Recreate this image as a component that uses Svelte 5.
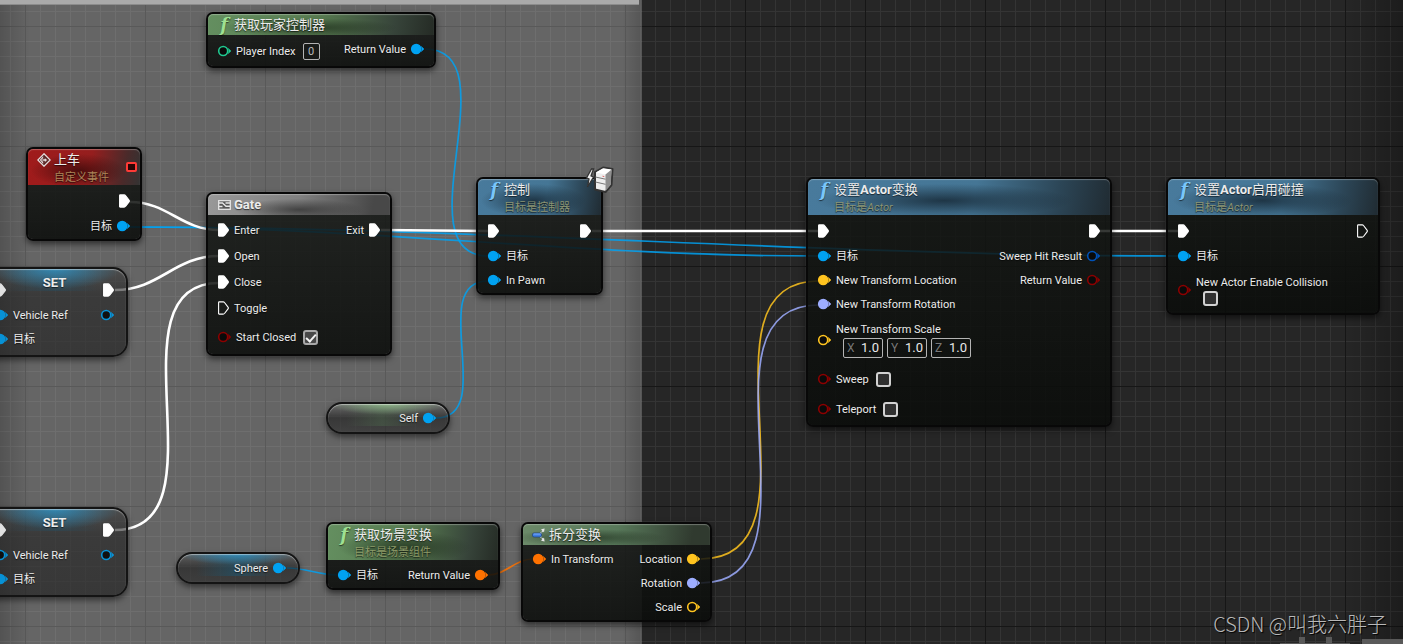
<script lang="ts">
	type Field = 'check' | 'checked' | 'number' | 'vector';

	type Pin = {
		type: string;
		label?: string;
		on?: boolean; // has a wire, drawn filled
		field?: Field;
		size?: string;
	};

	type GraphNode = {
		x: number;
		y: number;
		w: number;
		kind: string;
		icon?: string;
		title?: string;
		subtitle?: string;
		server?: boolean;
		delegate?: boolean;
		left: Pin[];
		right: Pin[];
	};

	const nodes: GraphNode[] = [
		{
			x: 206, y: 12, w: 230, kind: 'pure', icon: 'f', title: '获取玩家控制器',
			left: [{ type: 'int', label: 'Player Index', field: 'number', size: 'mid' }],
			right: [{ type: 'object', label: 'Return Value', on: true }]
		},
		{
			x: 26, y: 147, w: 116, kind: 'event', icon: 'event', title: '上车', subtitle: '自定义事件', delegate: true,
			left: [],
			right: [
				{ type: 'exec', on: true },
				{ type: 'object', label: '目标', on: true }
			]
		},
		{
			x: 206, y: 192, w: 186, kind: 'macro', icon: 'macro', title: 'Gate',
			left: [
				{ type: 'exec', label: 'Enter', on: true },
				{ type: 'exec', label: 'Open', on: true },
				{ type: 'exec', label: 'Close', on: true },
				{ type: 'exec', label: 'Toggle' },
				{ type: 'bool', label: 'Start Closed', field: 'checked', size: 'tall' }
			],
			right: [{ type: 'exec', label: 'Exit', on: true }]
		},
		{
			x: 476, y: 177, w: 127, kind: 'call', icon: 'f', title: '控制', subtitle: '目标是控制器', server: true,
			left: [
				{ type: 'exec', on: true },
				{ type: 'object', label: '目标', on: true },
				{ type: 'object', label: 'In Pawn', on: true }
			],
			right: [{ type: 'exec', on: true }]
		},
		{
			x: 806, y: 177, w: 306, kind: 'call', icon: 'f', title: '设置Actor变换', subtitle: '目标是Actor',
			left: [
				{ type: 'exec', on: true },
				{ type: 'object', label: '目标', on: true },
				{ type: 'vector', label: 'New Transform Location', on: true },
				{ type: 'rotator', label: 'New Transform Rotation', on: true },
				{ type: 'vector', label: 'New Transform Scale', field: 'vector', size: 'stack' },
				{ type: 'bool', label: 'Sweep', field: 'check', size: 'check-row' },
				{ type: 'bool', label: 'Teleport', field: 'check', size: 'check-row' }
			],
			right: [
				{ type: 'exec', on: true },
				{ type: 'struct', label: 'Sweep Hit Result' },
				{ type: 'bool', label: 'Return Value' }
			]
		},
		{
			x: 1166, y: 177, w: 214, kind: 'call', icon: 'f', title: '设置Actor启用碰撞', subtitle: '目标是Actor',
			left: [
				{ type: 'exec', on: true },
				{ type: 'object', label: '目标', on: true },
				{ type: 'bool', label: 'New Actor Enable Collision', field: 'check', size: 'stack' }
			],
			right: [{ type: 'exec' }]
		},
		{
			x: 326, y: 522, w: 174, kind: 'pure', icon: 'f', title: '获取场景变换', subtitle: '目标是场景组件',
			left: [{ type: 'object', label: '目标', on: true }],
			right: [{ type: 'transform', label: 'Return Value', on: true }]
		},
		{
			x: 521, y: 522, w: 191, kind: 'break', icon: 'break', title: '拆分变换',
			left: [{ type: 'transform', label: 'In Transform', on: true }],
			right: [
				{ type: 'vector', label: 'Location', on: true },
				{ type: 'rotator', label: 'Rotation', on: true },
				{ type: 'vector', label: 'Scale' }
			]
		}
	];

	const setters = [
		{ x: -18, y: 267, w: 146, refOn: true },
		{ x: -18, y: 507, w: 146, refOn: false }
	];

	const variables = [
		{ x: 326, y: 402, w: 124, label: 'Self', kind: 'self' },
		{ x: 176, y: 552, w: 124, label: 'Sphere', kind: 'component' }
	];

	// from, to, and how far the tangents reach out horizontally
	const wires = [
		{ type: 'object', a: [130, 227], b: [1178, 256], reach: 350 },
		{ type: 'object', a: [130, 227], b: [818, 256], reach: 250 },
		{ type: 'object', a: [425, 49], b: [488, 256], reach: 88 },
		{ type: 'object', a: [436, 418], b: [488, 281], reach: 62 },
		{ type: 'object', a: [287, 568], b: [338, 575], reach: 20 },
		{ type: 'transform', a: [488, 575], b: [533, 559], reach: 18 },
		{ type: 'vector', a: [701, 559], b: [818, 281], reach: 130 },
		{ type: 'rotator', a: [701, 583], b: [818, 305], reach: 130 },
		{ type: 'exec', a: [130, 202], b: [219, 230], reach: 38 },
		{ type: 'exec', a: [115, 290], b: [219, 256], reach: 45 },
		{ type: 'exec', a: [115, 530], b: [219, 283], reach: 114 },
		{ type: 'exec', a: [381, 230], b: [488, 231], reach: 30 },
		{ type: 'exec', a: [592, 231], b: [818, 231], reach: 60 },
		{ type: 'exec', a: [1100, 231], b: [1178, 231], reach: 30 }
	];

	function wirePath({ a, b, reach }: { a: number[]; b: number[]; reach: number }) {
		return `M${a[0]} ${a[1]} C${a[0] + reach} ${a[1]} ${b[0] - reach} ${b[1]} ${b[0]} ${b[1]}`;
	}

	// keeps latin parts of a title apart, they are set bold
	function parts(text: string) {
		return text.match(/[A-Za-z]+|[^A-Za-z]+/g) ?? [];
	}

	const isLatin = (s: string) => /^[A-Za-z]/.test(s);
</script>

{#snippet pinIcon(type: string, on = false, dim = false)}
	{#if type === 'exec'}
		<svg class="pin exec" class:dim width="11" height="14" viewBox="0 0 11 14">
			<path
				d="M1.2 .9H5.2Q6 .9 6.5 1.5L10.2 6.3Q10.6 7 10.2 7.7L6.5 12.5Q6 13.1 5.2 13.1H1.2Q.6 13.1 .6 12.5V1.5Q.6 .9 1.2 .9Z"
				fill={on ? 'currentColor' : 'none'}
				stroke="currentColor"
				stroke-width="1.1"
			/>
		</svg>
	{:else}
		<svg class="pin {type}" class:dim width="13" height="12" viewBox="0 0 13 12">
			<circle cx="5.2" cy="6" r="4.5" fill={on ? 'currentColor' : '#0a0a0a'} stroke="currentColor" stroke-width="1.6" />
			<path d="M10.4 3.4L13 6L10.4 8.6Q11.4 6 10.4 3.4Z" fill="currentColor" stroke="currentColor" stroke-width=".5" />
		</svg>
	{/if}
{/snippet}

{#snippet pinRow(pin: Pin, out = false)}
	<div class="row {pin.type === 'exec' ? 'exec-row' : ''} {pin.size ?? ''}" class:out>
		{@render pinIcon(pin.type, pin.on)}
		{#if pin.field === 'vector'}
			<div class="control">
				<span>{pin.label}</span>
				<span class="vector-fields">
					{#each ['X', 'Y', 'Z'] as axis}
						<label class="axis">{axis}<input type="text" value="1.0" /></label>
					{/each}
				</span>
			</div>
		{:else if pin.field === 'number'}
			<label class="control">
				<span class="text">{pin.label}</span>
				<input class="number" type="text" value="0" />
			</label>
		{:else if pin.field}
			<label class="control">
				<span class="text">{pin.label}</span>
				<input type="checkbox" checked={pin.field === 'checked'} />
			</label>
		{:else if pin.label}
			<span class="text">{pin.label}</span>
		{/if}
	</div>
{/snippet}

<main class="graph">
	<section class="comment"><div class="comment-bar"></div></section>

	<svg class="wires">
		{#each wires as wire}
			<path class={wire.type} d={wirePath(wire)} />
		{/each}
	</svg>

	{#each nodes as node}
		<article class="node {node.kind}" style="left: {node.x}px; top: {node.y}px; width: {node.w}px">
			<header class:two={node.subtitle}>
				<span class="icon">
					{#if node.icon === 'f'}
						<i class="fn">f</i>
					{:else if node.icon === 'event'}
						<svg width="14" height="14" viewBox="0 0 14 14">
							<path d="M7 .8L13.2 7L7 13.2L.8 7Z" fill="#55201f" stroke="#e4dcdc" stroke-width="1.3" />
							<path d="M6.2 3L2.8 7L6.2 11Z" fill="#e4dcdc" />
							<path d="M7.5 4.5V6H5V8H7.5V9.8L10.5 7Z" fill="#e4dcdc" stroke="#55201f" stroke-width=".6" />
						</svg>
					{:else if node.icon === 'macro'}
						<svg width="13" height="10" viewBox="0 0 13 10">
							<rect x=".7" y=".7" width="11.6" height="8.6" fill="#555" stroke="#e6e6e6" stroke-width="1.3" />
							<path d="M1 3H4.5L8 6.2H12M7.5 3H12M1 6.5H4.5" fill="none" stroke="#e6e6e6" stroke-width="1.5" />
						</svg>
					{:else}
						<svg width="14" height="14" viewBox="0 0 14 14">
							<path d="M8 6L11 2.5M8 8L11 11.5" stroke="#d8dde0" stroke-width="1.6" stroke-dasharray="2 1" />
							<path d="M9 1.2L12.6 .6L12 4.2ZM9 12.8L12.6 13.4L12 9.8Z" fill="#e8e8e8" />
							<rect x=".5" y="5" width="9" height="4" rx="1.5" fill="#3f7fe0" stroke="#1b3d78" stroke-width=".7" />
							<path d="M1.5 6H8.5" stroke="#8db8ff" stroke-width=".8" />
						</svg>
					{/if}
				</span>
				<div class="heading">
					<h2>{#each parts(node.title ?? '') as part}<span class:latin={isLatin(part)}>{part}</span>{/each}</h2>
					{#if node.subtitle}
						<p>{#each parts(node.subtitle) as part}<span class:latin={isLatin(part)}>{part}</span>{/each}</p>
					{/if}
				</div>
				{#if node.delegate}<span class="delegate"></span>{/if}
			</header>
			<div class="body">
				<div class="pins">
					{#each node.left as pin}{@render pinRow(pin)}{/each}
				</div>
				<div class="pins">
					{#each node.right as pin}{@render pinRow(pin, true)}{/each}
				</div>
			</div>
			{#if node.server}
				<svg class="server" width="30" height="30" viewBox="0 0 30 30">
					<path d="M6.5 4L1.5 13L4 14L2.5 22L8.5 12L6 11L8.5 4Z" fill="#f2f2f2" stroke="#333" stroke-width="1.3" />
					<path d="M10 7L18 2.5L27.5 4L26.5 20L20.5 27L10 24.5Z" fill="#eee" stroke="#333" stroke-width="2" stroke-linejoin="round" />
					<path d="M10.8 7.5L20.5 9.5L26.6 4.6L18.2 3.3Z" fill="#fff" />
					<path d="M20.5 9.5L26.6 4.6L25.8 19.8L20.5 26Z" fill="#8e8e8e" />
					<path d="M10.5 12L20.5 14.2M10.5 17L20.5 19.3" stroke="#777" stroke-width="1" />
					<path d="M17.5 11.2L19.3 11.6" stroke="#d66" stroke-width="1" />
				</svg>
			{/if}
		</article>
	{/each}

	{#each setters as node}
		<article class="node variable setter" style="left: {node.x}px; top: {node.y}px; width: {node.w}px">
			<div class="row exec-row split">
				{@render pinIcon('exec', true, true)}
				<h2 class="latin">SET</h2>
				{@render pinIcon('exec', true)}
			</div>
			<div class="row split">
				<span class="row">{@render pinIcon('object', node.refOn, true)}<span class="text">Vehicle Ref</span></span>
				{@render pinIcon('object', false, true)}
			</div>
			<div class="row">{@render pinIcon('object', true, true)}<span class="text">目标</span></div>
		</article>
	{/each}

	{#each variables as node}
		<article class="node variable getter {node.kind}" style="left: {node.x}px; top: {node.y}px; width: {node.w}px">
			<div class="row out">{@render pinIcon('object', true)}<span class="text">{node.label}</span></div>
		</article>
	{/each}

	<svg class="corner" width="123" height="8" viewBox="0 0 123 8">
		<path d="M19 1H25V7H46V1H52V7H70V8H0V7H19ZM82 3H123V8H82Z" fill="#595959" />
	</svg>
	<div class="credit">CSDN @叫我六胖子</div>
</main>

<style>
	:global(body) {
		background: #262626;
	}

	.graph {
		position: relative;
		min-height: 100vh;
		overflow: hidden;
		color: #ececec;
		font-family: Roboto, 'Noto Sans CJK SC', sans-serif;
		font-size: 11px;
		line-height: 16px;
		background:
			linear-gradient(to left, rgba(0, 0, 0, 0.25), transparent 60px),
			linear-gradient(to right, #161616 1px, transparent 1px) 25px 26px / 120px 120px,
			linear-gradient(to bottom, #161616 1px, transparent 1px) 25px 26px / 120px 120px,
			linear-gradient(to right, #343434 1px, transparent 1px) 10px 11px / 15px 15px,
			linear-gradient(to bottom, #343434 1px, transparent 1px) 10px 11px / 15px 15px,
			#262626;
	}

	.comment {
		position: absolute;
		inset: 0 auto 0 0;
		width: 642px;
		background:
			linear-gradient(to right, rgba(0, 0, 0, 0.18), transparent 30px),
			linear-gradient(to left, rgba(0, 0, 0, 0.16), transparent 20px),
			rgba(255, 255, 255, 0.29);
	}

	.comment-bar {
		height: 4px;
		margin-right: 3px;
		background: #aaa;
		border-bottom: 1px solid #8c8c8c;
	}

	.wires {
		position: absolute;
		inset: 0;
		width: 100%;
		height: 100%;
	}

	.wires path {
		fill: none;
		stroke: currentColor;
		stroke-width: 1.7;
		opacity: 0.85;
	}

	.wires path.exec {
		stroke-width: 2.6;
		opacity: 1;
	}

	.exec { color: #fff; }
	.object { color: #00a2f2; }
	.int { color: #1fc990; }
	.bool { color: #8c0000; }
	.vector { color: #ffc41f; }
	.rotator { color: #9dadff; }
	.transform { color: #ff7200; }
	.struct { color: #0052b8; }

	.node {
		position: absolute;
		box-sizing: border-box;
		padding-bottom: 1px;
		border: 2px solid #080808;
		border-radius: 7px;
		background: linear-gradient(rgba(20, 23, 20, 0.84), rgba(10, 12, 10, 0.88)) padding-box;
		box-shadow: 0 3px 6px rgba(0, 0, 0, 0.55);
		text-shadow: 0 1px 1px rgba(0, 0, 0, 0.6);
	}

	header {
		display: flex;
		gap: 4px;
		height: 21px;
		padding-left: 10px;
		border-radius: 5px 5px 0 0;
		box-shadow: inset 0 1px 1px rgba(255, 255, 255, 0.3);
	}

	header.two {
		height: 36px;
	}

	header.two + .body {
		padding-top: 3px;
	}

	.pure header {
		background:
			radial-gradient(ellipse at 45% 65%, rgba(24, 38, 22, 0.7), transparent 50%),
			linear-gradient(100deg, #648f60, #56794f 50%, #37443a 82%, #252b25);
	}

	.call header {
		background:
			radial-gradient(ellipse at 45% 60%, rgba(14, 26, 36, 0.7), transparent 55%),
			linear-gradient(100deg, #487a9c, #457695 55%, #2c4657 82%, #202b32);
	}

	.event header {
		background:
			radial-gradient(ellipse at 45% 60%, rgba(35, 5, 5, 0.65), transparent 55%),
			linear-gradient(100deg, #a01b1b, #951e1e 55%, #4a2a2a 85%, #333);
	}

	.macro header {
		background:
			radial-gradient(ellipse at 50% 75%, rgba(40, 40, 40, 0.7), transparent 50%),
			linear-gradient(100deg, #999, #808080 50%, #484848 90%);
	}

	.break header {
		background:
			radial-gradient(ellipse at 35% 65%, rgba(20, 32, 18, 0.6), transparent 45%),
			linear-gradient(100deg, #6c8a69, #58795a 50%, #303a2f 90%);
	}

	.icon {
		display: flex;
		align-items: center;
		justify-content: center;
		width: 12px;
		height: 21px;
	}

	.icon svg {
		flex: none;
	}

	.fn {
		color: #9ee092;
		font: italic bold 18px/18px 'DejaVu Serif', 'Liberation Serif', serif;
	}

	.call .fn {
		color: #7ac6fa;
	}

	.heading {
		flex: 1;
	}

	h2 {
		margin: 0;
		font-size: 13px;
		font-weight: 400;
		line-height: 22px;
		white-space: nowrap;
	}

	h2.latin,
	h2 .latin {
		font-weight: 700;
	}

	p {
		margin: 0;
		color: #8b9473;
		line-height: 14px;
		white-space: nowrap;
	}

	p .latin {
		font-style: italic;
	}

	.pure p {
		color: #8c9a68;
	}

	.event p {
		color: #ab8458;
	}

	.delegate {
		align-self: center;
		width: 7px;
		height: 6px;
		margin-right: 3px;
		border: 2px solid #ff3a36;
		border-radius: 2px;
		background: #2a0505;
	}

	.body {
		display: flex;
		justify-content: space-between;
		padding: 2px 10px 0;
	}

	.row {
		display: flex;
		align-items: center;
		gap: 5px;
		height: 24px;
		white-space: nowrap;
	}

	.row.out {
		flex-direction: row-reverse;
	}

	.exec-row { height: 26px; }
	.row.mid { height: 28px; }
	.row.check-row { height: 30px; }
	.row.tall { height: 32px; }
	.row.stack { height: 48px; }

	.call .row.stack:last-child {
		height: 44px;
	}

	.text {
		padding-top: 2px;
	}

	.pin {
		flex: none;
		overflow: visible;
	}

	.pin.dim {
		opacity: 0.85;
	}

	.control {
		display: flex;
		align-items: center;
		gap: 7px;
	}

	.stack .control {
		flex-direction: column;
		align-items: flex-start;
		gap: 0;
	}

	.stack .text {
		padding-top: 0;
	}

	.stack .control input[type='checkbox'],
	.vector-fields {
		margin-left: 7px;
	}

	.vector-fields {
		display: flex;
		gap: 4px;
	}

	.axis {
		display: flex;
		align-items: center;
		box-sizing: border-box;
		width: 40px;
		height: 20px;
		padding: 0 3px;
		border: 1px solid #b4b4b4;
		border-radius: 2px;
		color: #777;
		font-size: 12px;
	}

	input {
		box-sizing: border-box;
		margin: 0;
		color: #e8e8e8;
		font: inherit;
	}

	.axis input {
		flex: 1;
		min-width: 0;
		padding: 0;
		border: 0;
		background: none;
		font-size: 13px;
		text-align: right;
	}

	.number {
		width: 17px;
		height: 17px;
		padding: 0;
		border: 1px solid #b4b4b4;
		border-radius: 2px;
		background: none;
		color: #bbb;
		text-align: center;
	}

	input[type='checkbox'] {
		display: grid;
		place-items: center;
		width: 15px;
		height: 15px;
		border: 2px solid #d2d2d2;
		border-radius: 3px;
		background: #303030;
		appearance: none;
	}

	input[type='checkbox']:checked {
		border-color: #a8a8a8;
		background: #484848;
	}

	input[type='checkbox']:checked::after {
		content: '';
		width: 4px;
		height: 8px;
		margin-bottom: 3px;
		border: solid #f2f2f2;
		border-width: 0 2px 2px 0;
		transform: rotate(42deg);
	}

	.server {
		position: absolute;
		top: -14px;
		right: -14px;
	}

	.variable {
		border-color: #141414;
		box-shadow:
			0 3px 6px rgba(0, 0, 0, 0.5),
			inset 0 1px 1px rgba(255, 255, 255, 0.45);
	}

	.setter {
		padding: 8px 12px 4px 11px;
		border-radius: 15px;
		background:
			radial-gradient(ellipse at 50% 0, rgba(50, 150, 200, 0.8), transparent 65%) top / 100% 22px no-repeat padding-box,
			linear-gradient(to right, transparent 15%, rgba(30, 80, 105, 0.4) 50%, transparent 80%) top / 100% 22px no-repeat padding-box,
			linear-gradient(rgba(60, 60, 60, 0.6), rgba(30, 30, 30, 0.6) 25px, rgba(25, 25, 25, 0.6)) padding-box;
	}

	.setter h2 {
		align-self: flex-start;
		line-height: 12px;
	}

	.split {
		justify-content: space-between;
	}

	.getter {
		padding: 2px 12px;
		border-radius: 16px;
	}

	.self {
		background:
			radial-gradient(ellipse at 50% 0, rgba(150, 195, 145, 0.8), transparent 70%) top / 100% 11px no-repeat padding-box,
			linear-gradient(to right, transparent 15%, rgba(75, 100, 75, 0.5) 45%, transparent 75%) top / 100% 22px no-repeat padding-box,
			linear-gradient(rgba(110, 110, 110, 0.6), rgba(25, 25, 25, 0.6) 50%, rgba(40, 40, 40, 0.6)) padding-box;
	}

	.component {
		background:
			radial-gradient(ellipse at 50% 0, rgba(50, 150, 200, 0.8), transparent 70%) top / 100% 11px no-repeat padding-box,
			linear-gradient(to right, transparent 15%, rgba(30, 85, 110, 0.6) 50%, transparent 80%) top / 100% 22px no-repeat padding-box,
			linear-gradient(rgba(90, 90, 90, 0.6), rgba(25, 25, 25, 0.6) 50%, rgba(35, 35, 35, 0.6)) padding-box;
	}

	.corner {
		position: absolute;
		right: 0;
		bottom: 0;
	}

	.credit {
		position: absolute;
		right: 16px;
		bottom: 8px;
		color: #b8b8b8;
		font-family: 'Noto Sans CJK SC', sans-serif;
		font-size: 20px;
		font-weight: 300;
		line-height: 24px;
		text-shadow: 1px 1px 1px #000;
	}
</style>
